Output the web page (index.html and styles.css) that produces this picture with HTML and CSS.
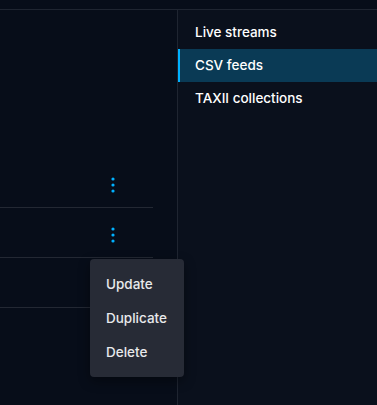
FILE: index.html
```html
<!DOCTYPE html>
<html lang="en">

<head>
  <meta charset="UTF-8">
  <meta name="viewport" content="width=device-width, initial-scale=1.0">
  <title>Data sharing</title>
  <link rel="stylesheet" href="styles.css">
</head>

<body>
  <div class="topbar"></div>
  <div class="container">
    <div class="left-section">
      <div class="list-header"></div>
      <div class="list-row">
        <button class="kebab" aria-label="Actions">
          <svg width="4" height="16" viewBox="0 0 4 16"><circle cx="2" cy="2" r="1.6"/><circle cx="2" cy="8" r="1.6"/><circle cx="2" cy="14" r="1.6"/></svg>
        </button>
      </div>
      <div class="list-row">
        <button class="kebab" aria-label="Actions">
          <svg width="4" height="16" viewBox="0 0 4 16"><circle cx="2" cy="2" r="1.6"/><circle cx="2" cy="8" r="1.6"/><circle cx="2" cy="14" r="1.6"/></svg>
        </button>
      </div>
      <div class="list-row"></div>

      <div class="popover">
        <div class="popover-item">Update</div>
        <div class="popover-item">Duplicate</div>
        <div class="popover-item">Delete</div>
      </div>
    </div>
    <div class="right-section">
      <div class="nav-item">Live streams</div>
      <div class="nav-item active">CSV feeds</div>
      <div class="nav-item">TAXII collections</div>
    </div>
  </div>
</body>

</html>
```

FILE: styles.css
```css
body {
  font-family: 'Inter', 'Noto Sans', sans-serif;
  margin: 0;
  padding: 0;
  background-color: #070d19;
  color: #ffffff;
  height: 100vh;
  display: flex;
  flex-direction: column;
  overflow: hidden;
}

.topbar {
  height: 9px;
  border-bottom: 1px solid #1f2531;
  flex-shrink: 0;
}

.container {
  display: flex;
  flex: 1;
}

.left-section {
  width: 178px;
  border-right: 1px solid #1f2531;
  padding-right: 24px;
  box-sizing: border-box;
  position: relative;
}

.list-header {
  height: 148px;
}

.list-row {
  height: 45px;
  border-bottom: 1px solid #232833;
  display: flex;
  justify-content: flex-end;
  align-items: center;
  padding-right: 38px;
  padding-top: 4px;
}

.kebab {
  background: none;
  border: none;
  padding: 0;
  display: flex;
  fill: #00b1ff;
  cursor: pointer;
}

.popover {
  position: absolute;
  left: 90px;
  top: 249px;
  width: 94px;
  padding: 8px 0;
  background-color: #272b36;
  border-radius: 4px;
  box-shadow: 0 4px 12px rgba(0, 0, 0, 0.4);
  z-index: 2;
}

.popover-item {
  height: 34px;
  line-height: 34px;
  padding-left: 16px;
  font-size: 13.5px;
  font-weight: 500;
  color: #e8e9eb;
}

.right-section {
  flex: 1;
  background-color: #0a101c;
  padding-top: 6px;
}

.nav-item {
  height: 33px;
  line-height: 33px;
  padding-left: 15px;
  font-size: 13.5px;
  font-weight: 500;
  color: #ffffff;
  border-left: 2px solid transparent;
}

.nav-item.active {
  background-color: #0a3a55;
  border-left-color: #00b1ff;
}
```
